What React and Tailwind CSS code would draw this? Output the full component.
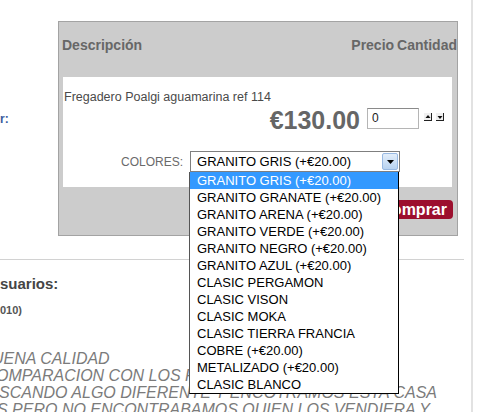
export default function App() {
  const options = [
    "GRANITO GRIS (+€20.00)",
    "GRANITO GRANATE (+€20.00)",
    "GRANITO ARENA (+€20.00)",
    "GRANITO VERDE (+€20.00)",
    "GRANITO NEGRO (+€20.00)",
    "GRANITO AZUL (+€20.00)",
    "CLASIC PERGAMON",
    "CLASIC VISON",
    "CLASIC MOKA",
    "CLASIC TIERRA FRANCIA",
    "COBRE (+€20.00)",
    "METALIZADO (+€20.00)",
    "CLASIC BLANCO",
  ];

  const SpinUp = () => (
    <svg width="8" height="8" viewBox="0 0 8 8">
      <rect x="0" y="0" width="8" height="8" fill="#f0f0f0" />
      <path d="M1.5 5 L4 2 L6.5 5 Z" fill="#111" />
      <rect x="0" y="7" width="8" height="1" fill="#222" />
      <rect x="7" y="0" width="1" height="8" fill="#222" />
    </svg>
  );
  const SpinDown = () => (
    <svg width="8" height="8" viewBox="0 0 8 8">
      <rect x="0" y="0" width="8" height="8" fill="#f0f0f0" />
      <path d="M1.5 3 L4 6 L6.5 3 Z" fill="#111" />
      <rect x="0" y="7" width="8" height="1" fill="#222" />
      <rect x="7" y="0" width="1" height="8" fill="#222" />
    </svg>
  );

  return (
    <div className="relative w-[478px] h-[412px] overflow-hidden bg-white font-['Liberation_Sans',Arial,sans-serif]">
      <div className="w-[473px] h-full border-r-2 border-[#e2e2e2]">
        {/* top area */}
        <div className="flex h-[259px]">
          <div className="w-[58px] pt-[112px] text-[12px] leading-[14px] font-bold text-[#3b5c9e]">
            r:
          </div>
          <div className="mt-[21px] w-[400px] h-[215px] bg-[#cccccc] border border-[#a3a3a3] flex flex-col">
            {/* header */}
            <div className="h-[55px] flex items-start pt-[15px] pl-[3px] text-[14px] leading-[16px] font-bold text-[#676767]">
              <span>Descripción</span>
              <span className="ml-auto">Precio</span>
              <span className="ml-[3px]">Cantidad</span>
            </div>
            {/* white panel */}
            <div className="ml-[4px] mr-[5px] h-[110px] bg-white flex flex-col">
              <div className="pt-[13px] pl-[1px] text-[12.5px] leading-[15px] text-[#4a4a4a]">
                Fregadero Poalgi aguamarina ref 114
              </div>
              <div className="mt-[3px] flex items-start justify-end pr-[8px]">
                <span className="text-[25px] leading-[25px] font-bold text-[#666666]">€130.00</span>
                <div className="ml-[7px] w-[52px] h-[21px] border border-[#b5b5b5] border-t-[#8a8a8a] pl-[4px] text-[12px] leading-[19px] text-[#222]">
                  0
                </div>
                <div className="ml-[5px] mt-[5px] flex gap-[4px]">
                  <SpinUp />
                  <SpinDown />
                </div>
              </div>
              <div className="mt-[18px] flex items-center pl-[58px]">
                <span className="text-[12px] leading-[14px] text-[#6a6a6a]">COLORES:</span>
                <div className="ml-[7px] w-[210px] h-[21px] border border-[#7f7f7f] flex items-center pl-[6px] pr-[1px]">
                  <span className="text-[13px] leading-[15px] text-black">GRANITO GRIS (+€20.00)</span>
                  <div className="ml-auto w-[16px] h-[17px] rounded-[2px] border border-[#98b9e2] bg-gradient-to-b from-[#e3eefa] to-[#b7d2f0] flex items-center justify-center">
                    <svg width="7" height="4" viewBox="0 0 7 4">
                      <path d="M0 0 L7 0 L3.5 4 Z" fill="#000" />
                    </svg>
                  </div>
                </div>
              </div>
            </div>
            {/* bottom */}
            <div className="flex justify-end pt-[13px] pr-[4px]">
              <div className="h-[19px] px-[6px] rounded-[4px] bg-[#9c0f2e] text-white font-bold text-[16px] leading-[19px]">
                Comprar
              </div>
            </div>
          </div>
        </div>
        <div className="w-[464px] h-px bg-[#d2d2d2]" />
        {/* lower area */}
        <div className="mt-[15px] text-[15px] leading-[18px] font-bold text-[#454545] whitespace-nowrap">
          suarios:
        </div>
        <div className="mt-[11px] text-[11px] leading-[13px] font-bold text-[#555555] whitespace-nowrap">
          010)
        </div>
        <div className="mt-[33px] text-[16px] leading-[17px] italic text-[#7b7b7b] whitespace-nowrap">
          <div className="ml-[-8px]">UENA CALIDAD</div>
          <div className="ml-[-4px]">OMPARACION CON LOS FREGADEROS</div>
          <div className="ml-[-1px]">SCANDO ALGO DIFERENTE Y ENCOTRAMOS ESTA CASA</div>
          <div className="ml-[-3px]">S PERO NO ENCONTRABAMOS QUIEN LOS VENDIERA Y</div>
        </div>
      </div>

      {/* open dropdown list */}
      <div className="absolute left-[189px] top-[172px] w-[210px] bg-white border-x border-b border-black border-l-[#555]">
        {options.map((o, i) => (
          <div
            key={o}
            className={
              i === 0
                ? "h-[17px] pl-[7px] text-[13px] leading-[17px] whitespace-nowrap bg-[#3399ff] text-white"
                : "h-[17px] pl-[7px] text-[13px] leading-[17px] whitespace-nowrap text-black"
            }
          >
            {o}
          </div>
        ))}
      </div>
    </div>
  );
}
